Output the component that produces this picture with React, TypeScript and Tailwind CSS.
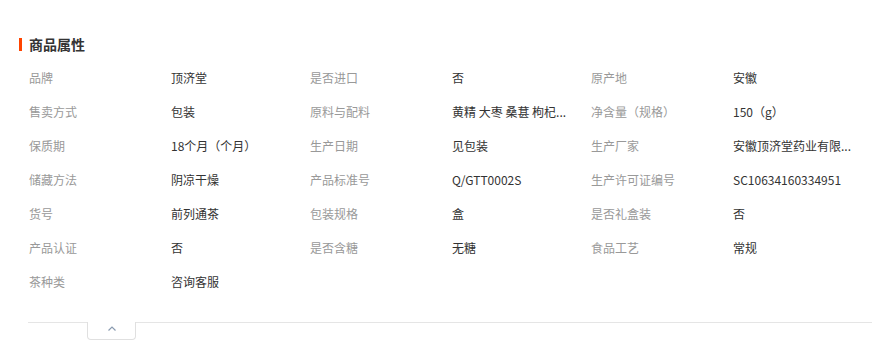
const rows: [string, string][][] = [
  [['品牌', '顶济堂'], ['是否进口', '否'], ['原产地', '安徽']],
  [['售卖方式', '包装'], ['原料与配料', '黄精 大枣 桑葚 枸杞...'], ['净含量（规格）', '150（g）']],
  [['保质期', '18个月（个月）'], ['生产日期', '见包装'], ['生产厂家', '安徽顶济堂药业有限...']],
  [['储藏方法', '阴凉干燥'], ['产品标准号', 'Q/GTT0002S'], ['生产许可证编号', 'SC10634160334951']],
  [['货号', '前列通茶'], ['包装规格', '盒'], ['是否礼盒装', '否']],
  [['产品认证', '否'], ['是否含糖', '无糖'], ['食品工艺', '常规']],
  [['茶种类', '咨询客服']],
];

export default function App() {
  return (
    <div
      className="w-[885px] h-[354px] bg-white overflow-hidden"
      style={{ fontFamily: '"Noto Sans CJK SC", "Noto Sans", sans-serif' }}
    >
      <div className="ml-[19px] mt-[36px] h-[16px] flex items-center">
        <div className="w-[3px] h-[13px] bg-[#ff4400]" />
        <span className="ml-[7px] text-[14px] leading-[16px] font-bold text-[#333]">商品属性</span>
      </div>

      <div className="ml-[29px] mt-[9px] w-[846px] grid grid-cols-[142px_139px_142px_139px_142px_142px]">
        {rows.map((row, i) =>
          row.map(([label, value], j) => (
            <div key={`${i}-${j}`} className="contents">
              <div className="h-[34px] leading-[34px] text-[12px] text-[#999] whitespace-nowrap">{label}</div>
              <div className="h-[34px] leading-[34px] text-[12px] text-[#333] whitespace-nowrap">{value}</div>
            </div>
          )),
        )}
      </div>

      <div className="mt-[23px] ml-[28px] w-[844px] border-t border-[#e5e5e5]">
        <div className="ml-[59px] -mt-px w-[49px] h-[18px] bg-white border border-t-0 border-[#e0e0e0] rounded-b-[4px] flex justify-center pt-[4px]">
          <svg width="8" height="5" viewBox="0 0 8 5" fill="none">
            <polyline points="0.5,4.5 4,1 7.5,4.5" stroke="#8a9bb0" strokeWidth="1.2" />
          </svg>
        </div>
      </div>
    </div>
  );
}
